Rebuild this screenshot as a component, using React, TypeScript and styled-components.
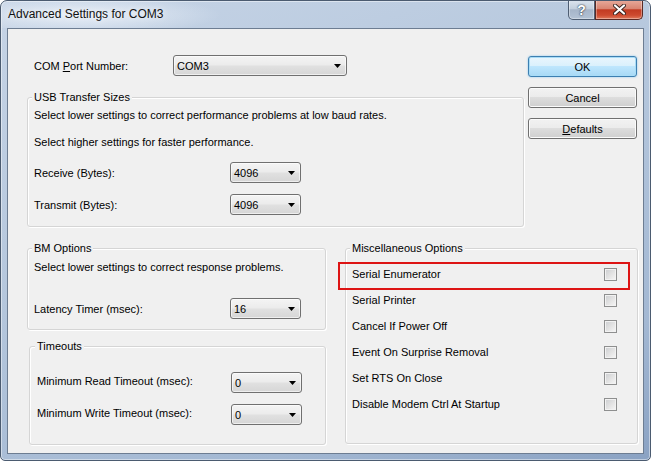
import React from 'react';
import styled, { createGlobalStyle } from 'styled-components';

const GlobalStyle = createGlobalStyle`
  html, body {
    margin: 0;
    padding: 0;
    background: #ffffff;
  }
  body {
    font-family: "Liberation Sans", Arial, sans-serif;
    font-size: 11px;
    color: #000000;
  }
`;

const Window = styled.div`
  width: 651px;
  height: 461px;
  box-sizing: border-box;
  display: flex;
  flex-direction: column;
  border: 1px solid #4b5b70;
  border-radius: 7px 7px 5px 5px;
  background: linear-gradient(160deg, #c6d4e6 0%, #b4c6dc 45%, #a3b8d3 80%, #8aa2c3 100%);
  box-shadow: inset 0 0 0 1px rgba(255, 255, 255, 0.45);
  overflow: hidden;
`;

const TitleBar = styled.div`
  height: 27px;
  display: flex;
  align-items: flex-start;
  padding-left: 7px;
  background: radial-gradient(ellipse 140px 20px at 80px 14px, rgba(240, 245, 251, 0.8), rgba(240, 245, 251, 0));
`;

const Title = styled.div`
  font-size: 12px;
  line-height: 27px;
  color: #111111;
  text-shadow: 0 0 6px rgba(255, 255, 255, 0.9);
`;

const Caption = styled.div`
  display: flex;
  margin-left: auto;
  margin-right: 7px;
  margin-top: -1px;
`;

const CaptionButton = styled.div<{ $close?: boolean }>`
  height: 20px;
  width: ${p => (p.$close ? 48 : 27)}px;
  box-sizing: border-box;
  display: flex;
  align-items: center;
  justify-content: center;
  border: 1px solid ${p => (p.$close ? '#5b2a24' : '#4e5d72')};
  border-top: none;
  border-radius: ${p => (p.$close ? '0 0 5px 0' : '0 0 0 5px')};
  background: ${p =>
    p.$close
      ? 'linear-gradient(#e8ab9c 0%, #d98572 45%, #c23b22 52%, #cd4a2f 80%, #e07a5c 100%)'
      : 'linear-gradient(#dde5ef 0%, #c3cfdd 45%, #a6b5c9 52%, #b3c2d5 100%)'};
  box-shadow: inset 0 0 0 1px rgba(255, 255, 255, 0.35);
  color: #ffffff;
  font-weight: bold;
  font-size: 14px;
  text-shadow: 0 0 1px #2c3440, 0 0 2px #2c3440;
`;

const Client = styled.div`
  flex: 1;
  margin: 0 6px 6px;
  border: 1px solid #6d7d92;
  background: #f0f0f0;
  padding: 26px 5px 0 19px;
  display: flex;
  flex-direction: column;
  line-height: 14px;
`;

const TopSection = styled.div`
  display: flex;
  justify-content: space-between;
  align-items: flex-start;
`;

const LeftTop = styled.div`
  width: 497px;
  display: flex;
  flex-direction: column;
`;

const ComRow = styled.div`
  display: flex;
  align-items: center;
  height: 21px;
  padding-left: 7px;
`;

const Label = styled.span<{ $w: number; $lift?: number }>`
  width: ${p => p.$w}px;
  flex-shrink: 0;
  padding-bottom: ${p => p.$lift ?? 0}px;
`;

const ButtonColumn = styled.div`
  display: flex;
  flex-direction: column;
  gap: 10px;
  margin-top: 1px;
  margin-right: 1px;
`;

const Button = styled.button<{ $default?: boolean }>`
  width: 109px;
  height: 21px;
  padding: 0;
  border: 1px solid ${p => (p.$default ? '#3c7fb1' : '#707070')};
  border-radius: 3px;
  background: ${p =>
    p.$default
      ? 'linear-gradient(#eaf6fd 0%, #d9f0fc 50%, #bee6fd 50%, #a7d9f5 100%)'
      : 'linear-gradient(#f2f2f2 0%, #ebebeb 50%, #dddddd 50%, #cfcfcf 100%)'};
  box-shadow: ${p =>
    p.$default ? 'inset 0 0 0 1px #a9dcf6, 0 0 2px #7fc2ee' : 'inset 0 0 0 1px #fbfbfb'};
  font-family: "Liberation Sans", Arial, sans-serif;
  font-size: 11px;
  color: #000000;
`;

const Group = styled.fieldset<{ $w: number; $pt: number; $pb: number; $pl?: number; $pr?: number; $mt?: number; $ml?: number }>`
  box-sizing: border-box;
  width: ${p => p.$w}px;
  min-inline-size: 0;
  margin: ${p => p.$mt ?? 0}px 0 0 ${p => p.$ml ?? 0}px;
  padding: ${p => p.$pt}px ${p => p.$pr ?? 6}px ${p => p.$pb}px ${p => p.$pl ?? 6}px;
  border: 1px solid #d5d5d5;
  border-radius: 3px;
  box-shadow: inset 1px 1px 0 #ffffff, 1px 1px 0 #ffffff;
  display: flex;
  flex-direction: column;
`;

const Legend = styled.legend`
  padding: 0 2px;
  margin-left: -2px;
  line-height: 14px;
  background: #f0f0f0;
`;

const Text = styled.div<{ $mt?: number }>`
  margin-top: ${p => p.$mt ?? 0}px;
  white-space: nowrap;
`;

const FieldRow = styled.div<{ $mt?: number }>`
  display: flex;
  align-items: center;
  height: 21px;
  margin-top: ${p => p.$mt ?? 0}px;
`;

const Select = styled.div<{ $w: number }>`
  width: ${p => p.$w}px;
  height: 21px;
  box-sizing: border-box;
  display: flex;
  align-items: center;
  padding-left: 3px;
  border: 1px solid #707070;
  border-radius: 3px;
  background: linear-gradient(#f4f4f4 0%, #ececec 45%, #e0e0e0 55%, #d6d6d6 100%);
  box-shadow: inset 0 0 0 1px rgba(255, 255, 255, 0.6);
`;

const Arrow = styled.svg`
  margin-left: auto;
  margin-right: 5px;
`;

const BottomSection = styled.div`
  display: flex;
  gap: 19px;
  margin-top: 14px;
  align-items: flex-start;
`;

const LeftColumn = styled.div`
  display: flex;
  flex-direction: column;
`;

const OptionRow = styled.div<{ $marked?: boolean }>`
  position: relative;
  height: 26px;
  display: flex;
  align-items: center;
  justify-content: space-between;

  &::after {
    content: "";
    display: ${p => (p.$marked ? 'block' : 'none')};
    position: absolute;
    left: -14px;
    right: -13px;
    top: 1px;
    bottom: -3px;
    border: 2px solid #dd1414;
  }
`;

const CheckBox = styled.span`
  width: 13px;
  height: 13px;
  box-sizing: border-box;
  border: 1px solid #8e8f8f;
  background: linear-gradient(135deg, #cbcdd0 0%, #e4e4e4 55%, #f7f7f7 100%);
  box-shadow: inset 0 0 0 1px #f2f2f2;
`;

const Dropdown = ({ value, width }: { value: string; width: number }) => (
  <Select $w={width}>
    <span>{value}</span>
    <Arrow width="7" height="4" viewBox="0 0 7 4">
      <polygon points="0,0 7,0 3.5,4" fill="#000" />
    </Arrow>
  </Select>
);

const options = [
  'Serial Enumerator',
  'Serial Printer',
  'Cancel If Power Off',
  'Event On Surprise Removal',
  'Set RTS On Close',
  'Disable Modem Ctrl At Startup',
];

const App = () => {
  return (
    <>
      <GlobalStyle />
      <Window>
        <TitleBar>
          <Title>Advanced Settings for COM3</Title>
          <Caption>
            <CaptionButton>?</CaptionButton>
            <CaptionButton $close>
              <svg width="13" height="11" viewBox="0 0 13 11">
                <path d="M2 1.5 L11 9.5 M11 1.5 L2 9.5" stroke="#3a2420" strokeWidth="4" strokeLinecap="round" />
                <path d="M2 1.5 L11 9.5 M11 1.5 L2 9.5" stroke="#ffffff" strokeWidth="2.2" strokeLinecap="round" />
              </svg>
            </CaptionButton>
          </Caption>
        </TitleBar>

        <Client>
          <TopSection>
            <LeftTop>
              <ComRow>
                <Label $w={139}>
                  COM <u>P</u>ort Number:
                </Label>
                <Dropdown value="COM3" width={174} />
              </ComRow>

              <Group $w={497} $mt={14} $pt={4} $pb={11}>
                <Legend>USB Transfer Sizes</Legend>
                <Text>Select lower settings to correct performance problems at low baud rates.</Text>
                <Text $mt={13}>Select higher settings for faster performance.</Text>
                <FieldRow $mt={13}>
                  <Label $w={196}>Receive (Bytes):</Label>
                  <Dropdown value="4096" width={71} />
                </FieldRow>
                <FieldRow $mt={11}>
                  <Label $w={196}>Transmit (Bytes):</Label>
                  <Dropdown value="4096" width={71} />
                </FieldRow>
              </Group>
            </LeftTop>

            <ButtonColumn>
              <Button $default>OK</Button>
              <Button>Cancel</Button>
              <Button>
                <u>D</u>efaults
              </Button>
            </ButtonColumn>
          </TopSection>

          <BottomSection>
            <LeftColumn>
              <Group $w={299} $pt={5} $pb={10}>
                <Legend>BM Options</Legend>
                <Text>Select lower settings to correct response problems.</Text>
                <FieldRow $mt={24}>
                  <Label $w={196}>Latency Timer (msec):</Label>
                  <Dropdown value="16" width={71} />
                </FieldRow>
              </Group>

              <Group $w={297} $ml={2} $mt={9} $pt={19} $pb={19} $pl={7}>
                <Legend>Timeouts</Legend>
                <FieldRow>
                  <Label $w={194} $lift={4}>Minimum Read Timeout (msec):</Label>
                  <Dropdown value="0" width={71} />
                </FieldRow>
                <FieldRow $mt={11}>
                  <Label $w={194} $lift={4}>Minimum Write Timeout (msec):</Label>
                  <Dropdown value="0" width={71} />
                </FieldRow>
              </Group>
            </LeftColumn>

            <Group $w={293} $pt={6} $pb={26} $pr={20}>
              <Legend>Miscellaneous Options</Legend>
              {options.map((o, i) => (
                <OptionRow key={o} $marked={i === 0}>
                  <span>{o}</span>
                  <CheckBox />
                </OptionRow>
              ))}
            </Group>
          </BottomSection>
        </Client>
      </Window>
    </>
  );
};

export default App;
